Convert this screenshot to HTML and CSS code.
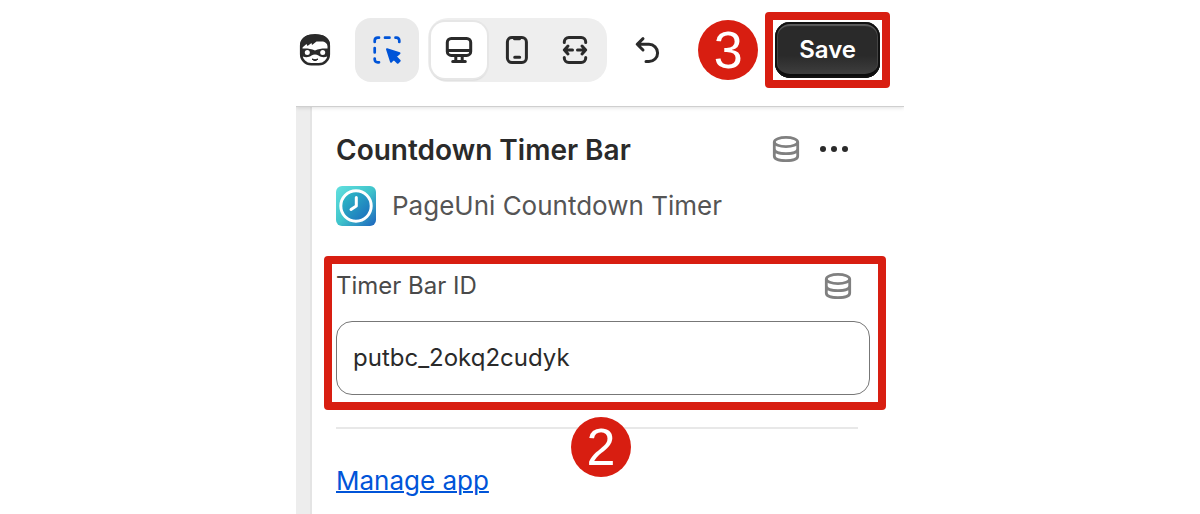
FILE: index.html
```html
<!DOCTYPE html>
<html lang="en">
<head>
    <meta charset="UTF-8">
    <meta name="viewport" content="width=device-width, initial-scale=1.0">
    <title>Countdown Timer Bar</title>
    <link rel="stylesheet" href="styles.css">
</head>
<body>
    <div class="editor">
        <header class="toolbar">
            <button class="tool avatar" type="button" aria-label="Preview as">
                <svg class="icon" viewBox="0 0 40 40">
                    <rect x="6.200" y="6" width="27.600" height="28.300" rx="10" fill="#fff" stroke="#2a2a2a" stroke-width="2.6"/>
                    <!-- Hair -->
                    <path d="M5 19 V14 C6 7 13 4 20 4 C28 4 35 8 35 14 V19 L33 16 C32 13.500 30 12 28 11.500 L21.500 11.500 L17 15 L16.500 13 L12.500 16 L11.500 14 L8 17 Z" fill="#2a2a2a"/>
                    <!-- Mask -->
                    <path d="M5 19 C10 18 15 18.500 20 20.500 C25 18.500 30 18 35 19 V25 C32 27.500 26.500 28 23.500 25.500 C21.500 24.300 18.500 24.300 16.500 25.500 C13.500 28 8 27.500 5 25 Z" fill="#2a2a2a"/>
                    <circle cx="12.300" cy="22.500" r="2.500" fill="#fff"/>
                    <circle cx="27.700" cy="22.500" r="2.500" fill="#fff"/>
                    <path d="M17 29 Q20 30.500 23 29 Q20 32.300 17 29 Z" fill="#2a2a2a" stroke="#2a2a2a" stroke-linejoin="round"/>
                </svg>
            </button>
            <button class="tool inspector" type="button" aria-label="Inspector">
                <svg class="icon" viewBox="0 0 40 40">
                    <path d="M7.700 12 V10.500 A3 3 0 0 1 10.700 7.700 H12 M18 7.700 H22.500 M28.500 7.700 H29.500 A3 3 0 0 1 32.300 10.500 V12 M7.700 18 V22.500 M7.700 28.500 V29.500 A3 3 0 0 0 10.700 32.300 H12" fill="none" stroke="#0054d8" stroke-width="2.700" stroke-linecap="round"/>
                    <path d="M20 19.200 L32.500 23.300 L28.800 26.600 L32.700 30.700 L30.700 32.700 L26.700 28.800 L24 31.800 Z" fill="#0054d8" stroke="#0054d8" stroke-width="2" stroke-linejoin="round"/>
                </svg>
            </button>
            <div class="views">
                <button class="tool view view-active" type="button" aria-label="Desktop">
                    <svg class="icon stroked" viewBox="0 0 40 40">
                        <rect x="8.300" y="8.400" width="23.400" height="17" rx="4"/>
                        <path d="M8.500 20.600 H31.500 M16.800 26 V31 M23.200 26 V31 M13.700 31.500 H26.300"/>
                    </svg>
                </button>
                <button class="tool view" type="button" aria-label="Mobile">
                    <svg class="icon stroked" viewBox="0 0 40 40">
                        <rect x="10.400" y="7.400" width="19" height="25.200" rx="4.500"/>
                        <path d="M17.500 8.700 H22.500 M17.700 27.300 H22.700"/>
                    </svg>
                </button>
                <button class="tool view" type="button" aria-label="Full width">
                    <svg class="icon stroked" viewBox="0 0 40 40">
                        <path d="M9.300 12.500 V11.900 A4.500 4.500 0 0 1 13.800 7.400 H26.200 A4.500 4.500 0 0 1 30.700 11.900 V12.500 M9.300 27.500 V28.100 A4.500 4.500 0 0 0 13.800 32.600 H26.200 A4.500 4.500 0 0 0 30.700 28.100 V27.500"/>
                        <path d="M13 16 L9.300 20 L13 24 M9.500 20 H17.500 M27 16 L30.700 20 L27 24 M30.500 20 H22.500"/>
                    </svg>
                </button>
            </div>
            <button class="tool undo" type="button" aria-label="Undo">
                <svg class="icon stroked" viewBox="0 0 40 40">
                    <path d="M15 8.700 L9.200 14.300 L15 20 M9.500 14.300 H21 A8.600 8.600 0 0 1 21 31.500 H18"/>
                </svg>
            </button>
            <div class="save-step">
                <span class="badge">3</span>
                <div class="highlight">
                    <button class="save" type="button">Save</button>
                </div>
            </div>
        </header>

        <div class="workspace">
            <div class="rail"></div>
            <main class="panel">
                <div class="title-row">
                    <h1 class="title">Countdown Timer Bar</h1>
                    <button class="tool small" type="button" aria-label="Connect dynamic source">
                        <svg class="icon database" viewBox="0 0 40 40">
                            <ellipse cx="20" cy="12" rx="11.700" ry="4.600"/>
                            <path d="M8.300 12 V26 C8.300 29 13.500 30.700 20 30.700 C26.500 30.700 31.700 29 31.700 26 V12 M8.300 19 C8.300 22 13.500 23.700 20 23.700 C26.500 23.700 31.700 22 31.700 19"/>
                        </svg>
                    </button>
                    <button class="tool small" type="button" aria-label="More actions">
                        <svg class="icon" viewBox="0 0 40 40" fill="#2a2a2a">
                            <circle cx="9" cy="19" r="3"/>
                            <circle cx="20" cy="19" r="3"/>
                            <circle cx="31" cy="19" r="3"/>
                        </svg>
                    </button>
                </div>

                <div class="app-row">
                    <svg class="app-logo" viewBox="0 0 40 40">
                        <defs>
                            <linearGradient id="logoEdge" x1="0" y1="0" x2="1" y2="1">
                                <stop offset="0%" stop-color="#62e0df"/>
                                <stop offset="50%" stop-color="#3fc4cb"/>
                                <stop offset="100%" stop-color="#1c63bd"/>
                            </linearGradient>
                            <linearGradient id="logoFace" x1="0" y1="0" x2="1" y2="1">
                                <stop offset="0%" stop-color="#2fc3c6"/>
                                <stop offset="100%" stop-color="#1b68bd"/>
                            </linearGradient>
                        </defs>
                        <rect width="40" height="40" rx="6" fill="url(#logoEdge)"/>
                        <circle cx="20" cy="20" r="15.200" fill="url(#logoFace)" stroke="#fff" stroke-width="3"/>
                        <path d="M20.300 11.500 V20 L15 23.500" fill="none" stroke="#fff" stroke-width="3" stroke-linecap="round" stroke-linejoin="round"/>
                    </svg>
                    <span class="app-name">PageUni Countdown Timer</span>
                </div>

                <div class="highlight field">
                    <div class="label-row">
                        <label class="label" for="timer-id">Timer Bar ID</label>
                        <button class="tool small" type="button" aria-label="Connect dynamic source">
                            <svg class="icon database" viewBox="0 0 40 40">
                                <ellipse cx="20" cy="13" rx="11.700" ry="4.600"/>
                                <path d="M8.300 13 V27 C8.300 30 13.500 31.700 20 31.700 C26.500 31.700 31.700 30 31.700 27 V13 M8.300 20 C8.300 23 13.500 24.700 20 24.700 C26.500 24.700 31.700 23 31.700 20"/>
                            </svg>
                        </button>
                    </div>
                    <input class="input" id="timer-id" type="text" value="putbc_2okq2cudyk" spellcheck="false">
                    <span class="badge field-badge">2</span>
                </div>

                <hr class="divider">
                <a class="manage" href="#">Manage app</a>
            </main>
        </div>
    </div>
</body>
</html>
```
FILE: styles.css
```css
* {
    box-sizing: border-box;
}

body {
    margin: 0;
    background: #fff;
    color: #2a2a2a;
    font-family: Inter, "Liberation Sans", sans-serif;
}

.editor {
    display: flex;
    flex-direction: column;
    max-width: 608px;
    min-height: 100vh;
    margin: 0 auto;
}

/* Toolbar */
.toolbar {
    position: relative;
    display: flex;
    align-items: center;
    gap: 9px;
    padding: 12px 14px 18px 0;
    border-bottom: 1px solid #cfcfcf;
    box-shadow: 0 1px 4px rgba(0, 0, 0, 0.12);
    clip-path: inset(0 0 -8px 0);
}

.tool {
    display: flex;
    align-items: center;
    justify-content: center;
    flex-shrink: 0;
    width: 64px;
    height: 64px;
    padding: 0;
    border: 0;
    border-radius: 16px;
    background: none;
}

.icon {
    flex-shrink: 0;
    width: 40px;
    height: 40px;
}

.stroked {
    fill: none;
    stroke: #2a2a2a;
    stroke-width: 3;
    stroke-linecap: round;
    stroke-linejoin: round;
}

.database {
    fill: none;
    stroke: #808080;
    stroke-width: 2.8;
}

.avatar {
    width: 38px;
    margin-right: 12px;
}

.inspector {
    background: #eaeaea;
}

.views {
    display: flex;
    gap: 2px;
    padding: 4px 4px 4px 3px;
    border-radius: 20px;
    background: #eee;
}

.view {
    width: 56px;
    height: 56px;
    border-radius: 14px;
}

.view-active {
    background: #fff;
    box-shadow: 0 0 0 2px #e6e6e6, 0 2px 2px rgba(0, 0, 0, 0.2);
}

.save-step {
    display: flex;
    align-items: center;
    gap: 7px;
    margin-left: auto;
}

.badge {
    display: flex;
    align-items: center;
    justify-content: center;
    width: 60px;
    height: 60px;
    border-radius: 50%;
    background: #d81e11;
    color: #fff;
    font-family: "Liberation Sans", Arial, sans-serif;
    font-size: 52px;
    line-height: 60px;
}

.highlight {
    border: 8px solid #d81e11;
    border-radius: 4px;
}

.save {
    display: block;
    height: 56px;
    margin: 2px;
    padding: 0 24px 2px;
    border: 0;
    border-radius: 15px;
    background: linear-gradient(#2a2a2a 60%, #424242);
    box-shadow: inset 0 0 0 2px #111, inset 0 -4px 0 #0c0c0c, inset 0 4px 1px #5c5c5c, inset 0 0 0 3px #444;
    color: #fff;
    font-family: inherit;
    font-size: 24px;
    font-weight: 600;
}

/* Settings panel */
.workspace {
    display: flex;
    flex: 1;
}

.rail {
    width: 16px;
    border-right: 2px solid #e4e4e4;
    background: #ededed;
}

.panel {
    flex: 1;
    padding: 23px 18px 12px 12px;
}

.title-row {
    display: flex;
    align-items: center;
    gap: 8px;
    padding: 0 32px 0 12px;
}

.title {
    flex: 1;
    margin: 0;
    font-size: 28px;
    font-weight: 600;
    line-height: 40px;
}

.small {
    width: 40px;
    height: 40px;
}

.app-row {
    display: flex;
    align-items: center;
    gap: 16px;
    margin: 16px 0 30px;
    padding-left: 12px;
}

.app-logo {
    width: 40px;
    height: 40px;
}

.app-name {
    color: #555;
    font-size: 26px;
    line-height: 40px;
}

.field {
    position: relative;
    padding: 2px 8px 7px 4px;
}

.label-row {
    display: flex;
    align-items: center;
    justify-content: space-between;
    margin-bottom: 15px;
    padding-right: 12px;
}

.label {
    padding-bottom: 2px;
    color: #4a4a4a;
    font-size: 24px;
}

.input {
    display: block;
    width: 100%;
    height: 74px;
    padding: 0 16px 2px;
    border: 1px solid #777;
    border-radius: 16px;
    background: #fff;
    color: #2a2a2a;
    font-family: inherit;
    font-size: 24px;
}

.field-badge {
    position: absolute;
    top: calc(100% + 15px);
    left: calc(50% - 34px);
}

.divider {
    height: 2px;
    margin: 17px 28px 32px 12px;
    border: 0;
    background: #e8e8e8;
}

.manage {
    margin-left: 12px;
    color: #0054d8;
    font-size: 26px;
    line-height: 40px;
    text-decoration-thickness: 2px;
}
```
